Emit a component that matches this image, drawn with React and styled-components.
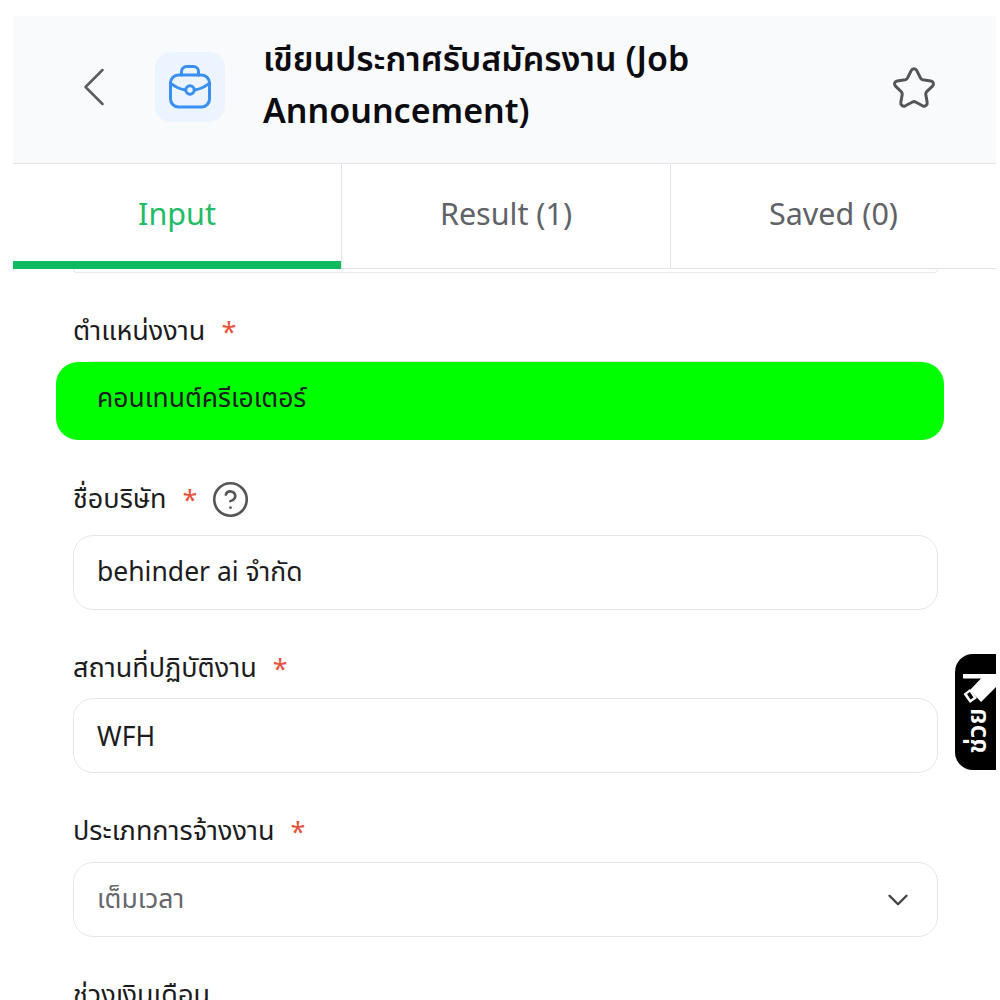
import styled, { createGlobalStyle } from "styled-components"
import { ChevronLeft, ChevronDown, CircleHelp } from "lucide-react"

const GlobalStyle = createGlobalStyle`
    html, body {
        margin: 0;
        padding: 0;
        height: 1000px;
        overflow: hidden;
        background: #fff;
        font-family: "Noto Sans", "Noto Sans Thai", sans-serif;
    }
`

const Page = styled.div`
    position: relative;
    box-sizing: border-box;
    width: 996px;
    height: 1000px;
    padding: 16px 0 0 13px;
    overflow: hidden;
`

const Header = styled.header`
    display: flex;
    align-items: center;
    height: 147px;
    background: #f9fafc;
    border-bottom: 1.5px solid #e4e4e6;
    padding: 0 60px 0 47px;
`

const BackButton = styled.div`
    display: flex;
    color: #5c5c5c;
    margin-right: 27px;
    margin-top: -5px;
`

const IconTile = styled.div`
    display: flex;
    align-items: center;
    justify-content: center;
    flex: none;
    width: 70px;
    height: 70px;
    border-radius: 16px;
    background: #ecf5ff;
    margin-right: 38px;
    margin-top: -5px;
`

const Title = styled.h1`
    flex: 1;
    margin: -12px 0 0;
    font-size: 34px;
    font-weight: 600;
    line-height: 52px;
    color: #0c0c10;
    max-width: 480px;
`

const StarButton = styled.div`
    display: flex;
    margin-left: auto;
    margin-top: -4px;
`

const Tabs = styled.nav`
    display: grid;
    grid-template-columns: 329px 329px 1fr;
    height: 105px;
    border-bottom: 1.5px solid #e4e4e6;
    box-sizing: border-box;
`

const Tab = styled.div`
    position: relative;
    display: flex;
    align-items: center;
    justify-content: center;
    font-size: 30.5px;
    padding-bottom: 6px;
    color: ${(p) => (p.$active ? "#22bb66" : "#5f6368")};
    border-right: 1.5px solid #e4e4e6;

    &:last-child {
        border-right: none;
    }

    ${(p) =>
        p.$active &&
        `
        &::after {
            content: "";
            position: absolute;
            left: 0;
            right: 0;
            bottom: -1px;
            height: 8px;
            background: #10bb60;
        }
    `}
`

const Form = styled.div`
    display: flex;
    flex-direction: column;
    padding: 0 58px 0 60px;
`

const PrevFieldEdge = styled.div`
    height: 3px;
    border: 1.5px solid #e9e9eb;
    border-top: none;
    border-radius: 0 0 14px 14px;
`

const Group = styled.div`
    display: flex;
    flex-direction: column;
    margin-top: ${(p) => p.$top}px;
`

const Label = styled.label`
    display: flex;
    align-items: center;
    height: 40px;
    margin-bottom: ${(p) => p.$gap}px;
    font-size: 27px;
    color: #1c1c20;
`

const Required = styled.span`
    color: #e5533d;
    margin-left: 16px;
`

const HelpIcon = styled.span`
    display: flex;
    margin-left: 14px;
    color: #555;
`

const Field = styled.div`
    position: relative;
    isolation: isolate;
    display: flex;
    align-items: center;
    justify-content: space-between;
    box-sizing: border-box;
    height: 75px;
    padding: 0 22px 0 23px;
    border: 1.5px solid #e7e7e9;
    border-radius: 20px;
    background: #fff;
    font-size: 26.500px;
    color: ${(p) => (p.$muted ? "#66686d" : "#1c1c20")};

    ${(p) =>
        p.$masked &&
        `
        background: #00ff00;
        background-clip: padding-box;
        border-color: #04dc04;
        border-top-color: #e7e7e9;

        &::before {
            content: "";
            position: absolute;
            z-index: -1;
            top: 0;
            left: -18px;
            right: -7px;
            bottom: -5px;
            border-radius: 22px;
            background: #00ff00;
        }
    `}
`

const HelpTab = styled.div`
    position: absolute;
    top: 654px;
    right: 0;
    box-sizing: border-box;
    display: flex;
    flex-direction: column;
    align-items: center;
    width: 41px;
    height: 116px;
    padding-top: 19px;
    border-radius: 18px 0 0 18px;
    background: #000;
    color: #fff;
`

const PenIconWrap = styled.span`
    display: flex;
    align-self: flex-end;
`

const HelpText = styled.span`
    writing-mode: vertical-rl;
    transform: rotate(180deg);
    margin-top: 5px;
    font-size: 27px;
    font-weight: 600;
    line-height: 1;
`

const BriefcaseIcon = () => (
    <svg width="44" height="44" viewBox="0 0 44 44" fill="none" stroke="#3b8ff0" strokeWidth="3" strokeLinecap="round" strokeLinejoin="round">
        <rect x="2.500" y="10" width="39" height="32" rx="8" />
        <path d="M13.500 10V6.500a5 5 0 0 1 5-5h7a5 5 0 0 1 5 5V10" />
        <path d="M2.500 18c4.500 4 9.500 6 15 7" />
        <path d="M41.500 18c-4.500 4-9.500 6-15 7" />
        <circle cx="22" cy="25" r="4.200" />
    </svg>
)

const StarIcon = () => (
    <svg width="44" height="44" viewBox="0 0 44 44" fill="none" stroke="#555" strokeWidth="3" strokeLinejoin="round">
        <path d="M19.200 4.600c1.200-2.400 4.400-2.400 5.600 0l3.600 7.300c.5 1 1.400 1.600 2.400 1.800l8 1.200c2.600.4 3.600 3.400 1.700 5.200l-5.800 5.600c-.7.700-1.100 1.800-.9 2.800l1.400 8c.4 2.600-2.200 4.500-4.600 3.300l-7.100-3.800c-1-.5-2-.5-3 0l-7.100 3.800c-2.400 1.200-5-.7-4.600-3.300l1.400-8c.2-1-.2-2.100-.9-2.800l-5.800-5.600c-1.900-1.800-.9-4.800 1.700-5.200l8-1.200c1-.2 1.900-.8 2.400-1.800z" />
    </svg>
)

const PenIcon = () => (
    <svg width="33" height="30" viewBox="0 0 33 30" fill="#fff">
        <path d="M0 1H33V14L18 29L7 17L18 5.500H0Z" />
        <path d="M0.500 21L7 16L14 25L7 30Z" />
        <path d="M4 21L7 19L10.500 24.500L7.500 26.500Z" fill="#000" />
    </svg>
)

const App = () => {
    return (
        <>
            <GlobalStyle />
            <Page>
                <Header>
                    <BackButton>
                        <ChevronLeft size={68} strokeWidth={0.9} />
                    </BackButton>
                    <IconTile>
                        <BriefcaseIcon />
                    </IconTile>
                    <Title>เขียนประกาศรับสมัครงาน (Job Announcement)</Title>
                    <StarButton>
                        <StarIcon />
                    </StarButton>
                </Header>
                <Tabs>
                    <Tab $active>Input</Tab>
                    <Tab>Result (1)</Tab>
                    <Tab>Saved (0)</Tab>
                </Tabs>
                <Form>
                    <PrevFieldEdge />
                    <Group $top={38}>
                        <Label $gap={10}>
                            ตำแหน่งงาน<Required>*</Required>
                        </Label>
                        <Field $masked>คอนเทนต์ครีเอเตอร์</Field>
                    </Group>
                    <Group $top={43}>
                        <Label $gap={16}>
                            ชื่อบริษัท<Required>*</Required>
                            <HelpIcon>
                                <CircleHelp size={39} strokeWidth={1.6} />
                            </HelpIcon>
                        </Label>
                        <Field>behinder ai จำกัด</Field>
                    </Group>
                    <Group $top={38}>
                        <Label $gap={10}>
                            สถานที่ปฏิบัติงาน<Required>*</Required>
                        </Label>
                        <Field>WFH</Field>
                    </Group>
                    <Group $top={38}>
                        <Label $gap={11}>
                            ประเภทการจ้างงาน<Required>*</Required>
                        </Label>
                        <Field $muted>
                            เต็มเวลา
                            <ChevronDown size={34} strokeWidth={1.7} color="#444" />
                        </Field>
                    </Group>
                    <Group $top={38}>
                        <Label $gap={10}>ช่วงเงินเดือน</Label>
                    </Group>
                </Form>
                <HelpTab>
                    <PenIconWrap>
                        <PenIcon />
                    </PenIconWrap>
                    <HelpText>ช่วย</HelpText>
                </HelpTab>
            </Page>
        </>
    )
}

export default App
